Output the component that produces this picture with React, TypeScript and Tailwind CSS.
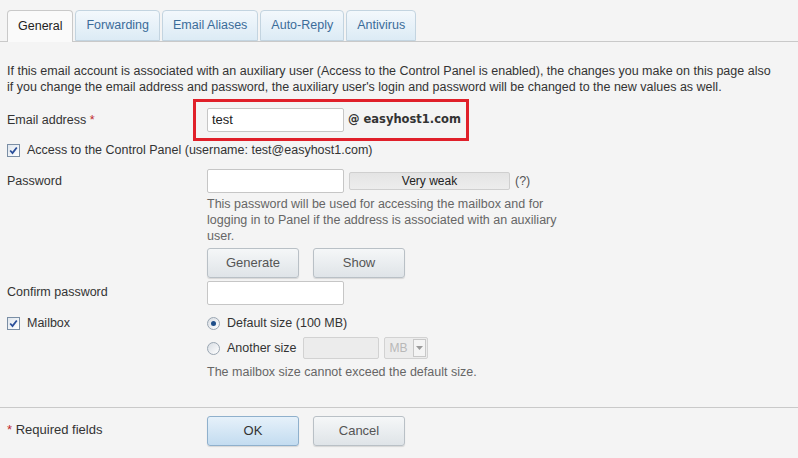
import React from "react";

const font = { fontFamily: '"Liberation Sans", Arial, sans-serif' };

function Tab({ label, active }: { label: string; active?: boolean }) {
    return active ? (
        <div className="h-[32px] px-[10px] flex items-center rounded-t-[4px] border border-b-0 border-[#c9c9c9] bg-[#fafafa] text-[#222] -mb-px relative z-10">
            {label}
        </div>
    ) : (
        <div className="h-[31px] px-[10px] flex items-center rounded-t-[4px] border border-[#c3d4e0] bg-gradient-to-b from-[#f3f8fc] to-[#dcebf5] text-[#3b6c99]">
            {label}
        </div>
    );
}

function CheckBox() {
    return (
        <span className="w-[13px] h-[13px] border border-[#7a8ea5] bg-gradient-to-br from-[#dfe6ee] to-[#ffffff] flex items-center justify-center shrink-0">
            <svg width="9" height="9" viewBox="0 0 9 9">
                <path d="M1.2 4.5 L3.5 7 L7.8 1.5" fill="none" stroke="#2a4e9a" strokeWidth="1.8" />
            </svg>
        </span>
    );
}

function Radio({ on }: { on?: boolean }) {
    return (
        <span className="w-[13px] h-[13px] rounded-full border border-[#9aa6b2] bg-gradient-to-br from-[#d8dde3] to-[#ffffff] flex items-center justify-center shrink-0">
            {on && <span className="w-[5px] h-[5px] rounded-full bg-[#1f4f8a]" />}
        </span>
    );
}

function Input({ value }: { value?: string }) {
    return (
        <div className="w-[137px] h-[24px] bg-white border border-[#c6c6c6] rounded-[2px] px-[4px] flex items-center text-[13px] text-[#222]">
            {value}
        </div>
    );
}

function Btn({ label, primary }: { label: string; primary?: boolean }) {
    return (
        <div
            className={`w-[92px] h-[30px] rounded-[3px] border flex items-center justify-center text-[13px] shadow-[0_1px_1px_rgba(0,0,0,0.12)] ${
                primary
                    ? "border-[#8fb0cc] bg-gradient-to-b from-[#e6f1fa] to-[#c3dcf0] text-[#333]"
                    : "border-[#b9c0c6] bg-gradient-to-b from-[#f5f7f8] to-[#dfe4e8] text-[#555]"
            }`}
        >
            {label}
        </div>
    );
}

export default function App() {
    return (
        <div className="w-[798px] h-[458px] bg-[#f4f4f4] overflow-hidden text-[12.5px] text-[#333]" style={font}>
            {/* tabs */}
            <div className="pt-[10px] pl-[7px] flex gap-[2px] items-end border-b border-[#c9c9c9]">
                <Tab label="General" active />
                <Tab label="Forwarding" />
                <Tab label="Email Aliases" />
                <Tab label="Auto-Reply" />
                <Tab label="Antivirus" />
            </div>

            <div className="pl-[7px]">
                <p className="mt-[21px] leading-[16px] whitespace-nowrap text-[#333] overflow-hidden">
                    If this email account is associated with an auxiliary user (Access to the Control Panel is enabled), the changes you make on this page also
                    <br />
                    if you change the email address and password, the auxiliary user's login and password will be changed to the new values as well.
                </p>

                <div className="grid grid-cols-[200px_1fr] mt-[13px]">
                    {/* email */}
                    <div className="pt-[3px]">
                        Email address <span className="text-[#c0282d]">*</span>
                    </div>
                    <div className="relative">
                        <div className="absolute left-[-14px] top-[-9px] w-[276px] h-[42px] border-[3px] border-[#e0202a]" />
                        <div className="flex items-center gap-[4px]">
                            <Input value="test" />
                            <span className="font-bold text-[11.5px] text-[#333]" style={{ fontFamily: '"DejaVu Sans", sans-serif' }}>
                                @ easyhost1.com
                            </span>
                        </div>
                    </div>

                    {/* access */}
                    <div className="col-span-2 flex items-center gap-[7px] mt-[11px] h-[14px]">
                        <CheckBox />
                        <span>Access to the Control Panel (username: test@easyhost1.com)</span>
                    </div>

                    {/* password */}
                    <div className="mt-[12px] pt-[3px]">Password</div>
                    <div className="mt-[12px]">
                        <div className="flex items-center">
                            <Input />
                            <div className="ml-[5px] w-[161px] h-[18px] rounded-[2px] border border-[#cfcfcf] bg-gradient-to-b from-[#e4e4e4] to-[#ededed] flex items-center justify-center text-[12px] text-[#222]">
                                Very weak
                            </div>
                            <span className="ml-[5px] text-[#555]">(?)</span>
                        </div>
                        <p className="mt-[3px] w-[380px] leading-[16px] text-[#666]">
                            This password will be used for accessing the mailbox and for logging in to Panel if the address is associated with an auxiliary user.
                        </p>
                        <div className="flex gap-[14px] mt-[4px]">
                            <Btn label="Generate" />
                            <Btn label="Show" />
                        </div>
                    </div>

                    {/* confirm */}
                    <div className="mt-[3px] pt-[2px]">Confirm password</div>
                    <div className="mt-[3px]">
                        <Input />
                    </div>

                    {/* mailbox */}
                    <div className="flex items-center gap-[7px] mt-[11px] h-[14px]">
                        <CheckBox />
                        <span>Mailbox</span>
                    </div>
                    <div className="mt-[11px]">
                        <div className="flex items-center gap-[7px] h-[14px]">
                            <Radio on />
                            <span>Default size (100 MB)</span>
                        </div>
                        <div className="flex items-center gap-[7px] mt-[7px]">
                            <Radio />
                            <span>Another size</span>
                            <div className="w-[76px] h-[22px] border border-[#d2d2d2] bg-[#ececec] rounded-[2px]" />
                            <div className="w-[44px] h-[22px] border border-[#d2d2d2] bg-[#ececec] rounded-[2px] flex items-center pl-[4px] text-[#b8b8b8] text-[12px] -ml-[2px]">
                                MB
                                <span className="ml-auto mr-[1px] w-[13px] h-[18px] border border-[#c8c8c8] bg-[#f4f4f4] flex items-center justify-center">
                                    <svg width="7" height="4" viewBox="0 0 7 4">
                                        <path d="M0 0 L7 0 L3.5 4 Z" fill="#9a9a9a" />
                                    </svg>
                                </span>
                            </div>
                        </div>
                        <p className="mt-[4px] text-[#666]">The mailbox size cannot exceed the default size.</p>
                    </div>
                </div>
            </div>

            <div className="mt-[25px] border-t border-[#c9c9c9]" />

            <div className="pl-[7px] grid grid-cols-[200px_1fr] mt-[8px]">
                <div className="pt-[4px] text-[13px]">
                    <span className="text-[#c0282d]">*</span> Required fields
                </div>
                <div className="flex gap-[14px]">
                    <Btn label="OK" primary />
                    <Btn label="Cancel" />
                </div>
            </div>
        </div>
    );
}
